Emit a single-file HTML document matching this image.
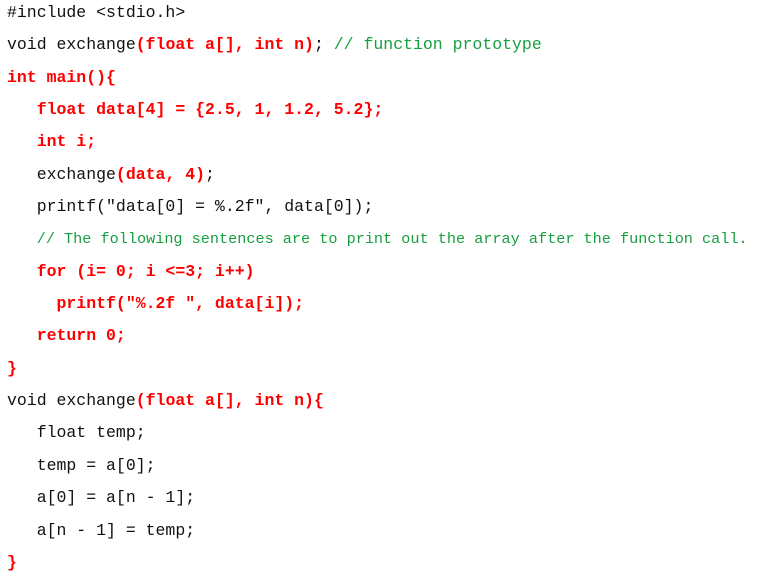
<!DOCTYPE html>
<html><head><meta charset="utf-8"><style>
html,body{margin:0;padding:0;background:#fff;width:758px;height:573px;overflow:hidden}
.c{position:absolute;left:7px;top:-3px;font-family:"Liberation Mono",monospace;font-size:16.5px;line-height:32.35px;color:#111;white-space:pre}
.r{color:#f00;font-weight:bold}
.g{color:#17a040}
.s{font-size:15.2px}
</style></head><body>
<div class="c">#include &lt;stdio.h&gt;
void exchange<span class="r">(float a[], int n)</span>; <span class="g">// function prototype</span>
<span class="r">int main(){</span>
<span class="r">   float data[4] = {2.5, 1, 1.2, 5.2};</span>
<span class="r">   int i;</span>
   exchange<span class="r">(data, 4)</span>;
   printf("data[0] = %.2f", data[0]);
   <span class="g s">// The following sentences are to print out the array after the function call.</span>
<span class="r">   for (i= 0; i &lt;=3; i++)</span>
<span class="r">     printf("%.2f ", data[i]);</span>
<span class="r">   return 0;</span>
<span class="r">}</span>
void exchange<span class="r">(float a[], int n){</span>
   float temp;
   temp = a[0];
   a[0] = a[n - 1];
   a[n - 1] = temp;
<span class="r">}</span></div>
</body></html>
